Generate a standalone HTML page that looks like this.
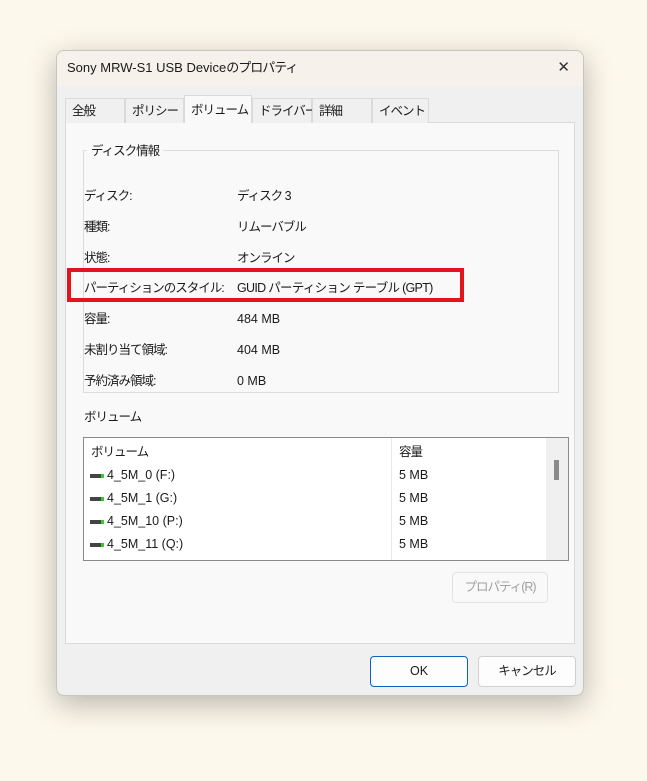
<!DOCTYPE html><html><head><meta charset="utf-8"><style>
*{box-sizing:border-box;margin:0;padding:0}
body{width:647px;height:781px;background:#fdf8ec;font-family:"Liberation Sans","Noto Sans CJK JP",sans-serif;font-size:12.5px;line-height:16px;color:#1a1a1a;position:relative;overflow:hidden;white-space:nowrap}
.win{position:absolute;left:56px;top:50px;width:528px;height:646px;background:#f0f0f0;border:1px solid #c8c4c0;border-radius:8px;box-shadow:0 8px 30px rgba(0,0,0,.28);overflow:hidden}
.title{height:35px;background:#f7f1ec;padding:9px 0 0 10px;font-size:13px}
.close{position:absolute;right:13px;top:9px;font-size:15px;color:#333}
.a{position:absolute}
.tab{position:absolute;top:47px;height:25px;background:#f0f0f0;border:1px solid #dadada;border-bottom:none;padding:4px 0 0 6px;font-size:12.5px;letter-spacing:-1px}
.panel{position:absolute;left:8px;top:71px;width:510px;height:522px;background:#f9f9f9;border:1px solid #dadada}
.lbl{position:absolute}
.j{letter-spacing:-1px}
.btn{position:absolute;background:#fdfdfd;border:1px solid #d0d0d0;border-radius:4px;text-align:center;line-height:28px}
</style></head><body>
<div class="win">
<div class="title">Sony MRW-S1 USB Device<span class="j">のプロパティ</span></div>
<div class="close">✕</div>
<div class="panel"></div>
<div class="tab" style="left:8px;width:60px">全般</div>
<div class="tab" style="left:68px;width:59px">ポリシー</div>
<div class="tab" style="left:195px;width:60px">ドライバー</div>
<div class="tab" style="left:255px;width:60px">詳細</div>
<div class="tab" style="left:315px;width:57px">イベント</div>
<div class="tab" style="left:127px;top:44px;height:28px;width:68px;background:#f9f9f9;padding-top:6px">ボリューム</div>
<div class="a" style="left:26px;top:99px;width:476px;height:243px;border:1px solid #dcdcdc"></div>
<div class="lbl j" style="left:30px;top:92px;background:#f9f9f9;padding:0 4px">ディスク情報</div>
<div class="lbl j" style="left:27px;top:137px">ディスク:</div><div class="lbl j" style="left:180px;top:137px">ディスク 3</div>
<div class="lbl j" style="left:27px;top:168px">種類:</div><div class="lbl j" style="left:180px;top:168px">リムーバブル</div>
<div class="lbl j" style="left:27px;top:199px">状態:</div><div class="lbl j" style="left:180px;top:199px">オンライン</div>
<div class="lbl j" style="left:27px;top:229px">パーティションのスタイル:</div><div class="lbl" style="left:180px;top:229px;letter-spacing:-0.7px">GUID パーティション テーブル (GPT)</div>
<div class="lbl j" style="left:27px;top:260px">容量:</div><div class="lbl" style="left:180px;top:260px">484 MB</div>
<div class="lbl j" style="left:27px;top:291px">未割り当て領域:</div><div class="lbl" style="left:180px;top:291px">404 MB</div>
<div class="lbl j" style="left:27px;top:322px">予約済み領域:</div><div class="lbl" style="left:180px;top:322px">0 MB</div>
<div class="a" style="left:10px;top:217px;width:397px;height:34px;border:4px solid #e3141e"></div>
<div class="lbl j" style="left:27px;top:358px">ボリューム</div>
<div class="a" style="left:26px;top:386px;width:486px;height:124px;background:#fff;border:1px solid #8a8a8a"></div>
<div class="a" style="left:334px;top:387px;width:1px;height:122px;background:#eaeaea"></div>
<div class="a" style="left:489px;top:387px;width:22px;height:122px;background:#f0f0f0"></div>
<div class="a" style="left:497px;top:409px;width:5px;height:20px;background:#8a8a8a"></div>
<div class="lbl j" style="left:34px;top:393px">ボリューム</div><div class="lbl j" style="left:342px;top:393px">容量</div>
<div class="lbl" style="left:33px;top:416px"><span style="display:inline-block;width:14px;height:4px;background:#444;border-right:3px solid #3c3;vertical-align:middle;margin-right:3px"></span>4_5M_0 (F:)</div><div class="lbl" style="left:342px;top:416px">5 MB</div>
<div class="lbl" style="left:33px;top:439px"><span style="display:inline-block;width:14px;height:4px;background:#444;border-right:3px solid #3c3;vertical-align:middle;margin-right:3px"></span>4_5M_1 (G:)</div><div class="lbl" style="left:342px;top:439px">5 MB</div>
<div class="lbl" style="left:33px;top:462px"><span style="display:inline-block;width:14px;height:4px;background:#444;border-right:3px solid #3c3;vertical-align:middle;margin-right:3px"></span>4_5M_10 (P:)</div><div class="lbl" style="left:342px;top:462px">5 MB</div>
<div class="lbl" style="left:33px;top:485px"><span style="display:inline-block;width:14px;height:4px;background:#444;border-right:3px solid #3c3;vertical-align:middle;margin-right:3px"></span>4_5M_11 (Q:)</div><div class="lbl" style="left:342px;top:485px">5 MB</div>
<div class="btn j" style="left:395px;top:521px;width:96px;height:31px;color:#a0a0a0;background:#f9f9f9;border-color:#e2e2e2">プロパティ(R)</div>
<div class="btn" style="left:313px;top:605px;width:98px;height:31px;border-color:#1060c0">OK</div>
<div class="btn j" style="left:421px;top:605px;width:98px;height:31px">キャンセル</div>
</div>
</body></html>
